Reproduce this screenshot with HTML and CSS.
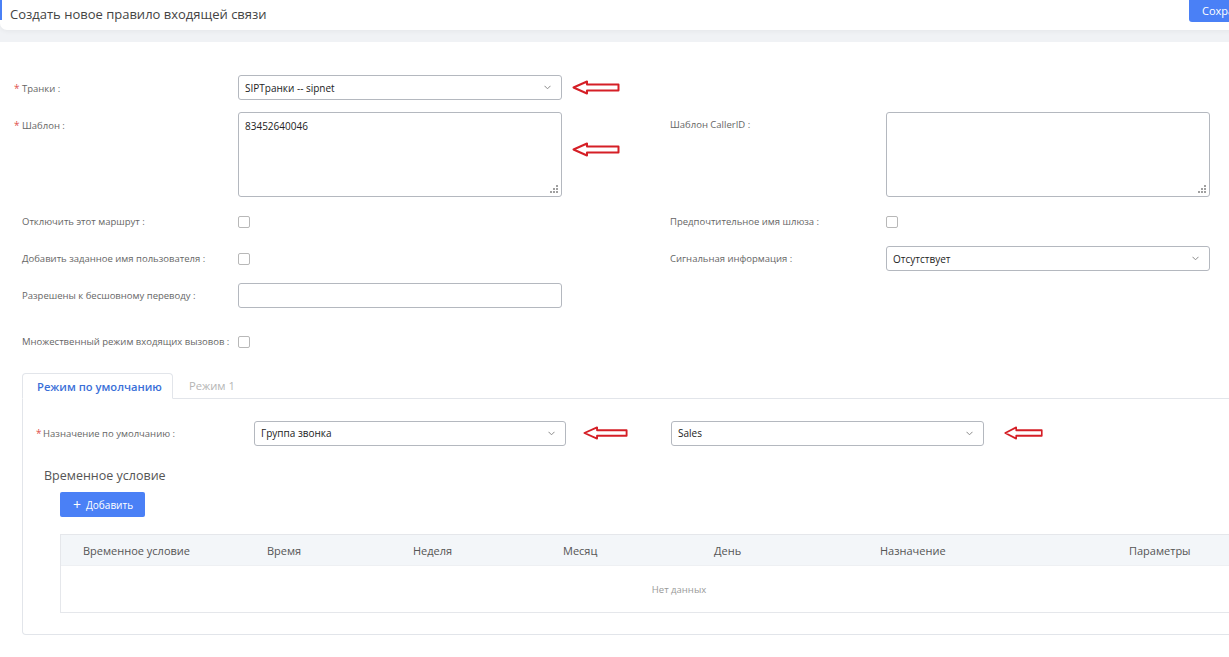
FILE: index.html
```html
<!DOCTYPE html>
<html lang="ru">
<head>
<meta charset="utf-8">
<title>Создать новое правило входящей связи</title>
<link rel="stylesheet" href="styles.css">
</head>
<body>
<div class="page">
  <div class="top-wrap">
    <header class="topbar">
      <span class="edge"></span>
      <h1 class="title">Создать новое правило входящей связи</h1>
      <button class="save" type="button">Сохранить</button>
    </header>
  </div>

  <main class="content">
    <div class="form">
      <!-- row 1 -->
      <div class="label req">Транки :</div>
      <div class="select"><span>SIPТранки -- sipnet</span><svg class="chev" width="7" height="5" viewBox="0 0 7 5"><path d="M0.5 0.8 L3.5 3.8 L6.5 0.8" fill="none" stroke="#8a8a8a" stroke-width="1"/></svg></div>
      <div class="arrow-cell"><svg class="arrow" width="48" height="15" viewBox="0 0 48 15"><path d="M1.5 7.5 L15 1.5 L15 4.5 L46.5 4.5 L46.5 10.5 L15 10.5 L15 13.5 Z" fill="#fff" stroke="#d51f26" stroke-width="2" stroke-linejoin="round"/></svg></div>
      <div></div>
      <div></div>

      <!-- row 2 -->
      <div class="label req top">Шаблон :</div>
      <div class="textarea"><span>83452640046</span><svg class="grip" width="8" height="8" viewBox="0 0 8 8"><rect x="6" y="0" width="2" height="2" fill="#a0a0a0"/><rect x="3" y="3" width="2" height="2" fill="#a0a0a0"/><rect x="6" y="3" width="2" height="2" fill="#a0a0a0"/><rect x="0" y="6" width="2" height="2" fill="#a0a0a0"/><rect x="3" y="6" width="2" height="2" fill="#a0a0a0"/><rect x="6" y="6" width="2" height="2" fill="#a0a0a0"/></svg></div>
      <div class="arrow-cell lower"><svg class="arrow" width="48" height="15" viewBox="0 0 48 15"><path d="M1.5 7.5 L15 1.5 L15 4.5 L46.5 4.5 L46.5 10.5 L15 10.5 L15 13.5 Z" fill="#fff" stroke="#d51f26" stroke-width="2" stroke-linejoin="round"/></svg></div>
      <div class="label right top">Шаблон CallerID :</div>
      <div class="textarea"><svg class="grip" width="8" height="8" viewBox="0 0 8 8"><rect x="6" y="0" width="2" height="2" fill="#a0a0a0"/><rect x="3" y="3" width="2" height="2" fill="#a0a0a0"/><rect x="6" y="3" width="2" height="2" fill="#a0a0a0"/><rect x="0" y="6" width="2" height="2" fill="#a0a0a0"/><rect x="3" y="6" width="2" height="2" fill="#a0a0a0"/><rect x="6" y="6" width="2" height="2" fill="#a0a0a0"/></svg></div>

      <!-- row 3 -->
      <div class="label">Отключить этот маршрут :</div>
      <div class="check-cell"><span class="checkbox"></span></div>
      <div></div>
      <div class="label right">Предпочтительное имя шлюза :</div>
      <div class="check-cell"><span class="checkbox"></span></div>

      <!-- row 4 -->
      <div class="label">Добавить заданное имя пользователя :</div>
      <div class="check-cell"><span class="checkbox"></span></div>
      <div></div>
      <div class="label right">Сигнальная информация :</div>
      <div class="select"><span>Отсутствует</span><svg class="chev" width="7" height="5" viewBox="0 0 7 5"><path d="M0.5 0.8 L3.5 3.8 L6.5 0.8" fill="none" stroke="#8a8a8a" stroke-width="1"/></svg></div>

      <!-- row 5 -->
      <div class="label">Разрешены к бесшовному переводу :</div>
      <div class="input"></div>
      <div></div>
      <div></div>
      <div></div>

      <!-- row 6 -->
      <div class="label bottom">Множественный режим входящих вызовов :</div>
      <div class="check-cell bottom"><span class="checkbox"></span></div>
      <div></div>
      <div></div>
      <div></div>
    </div>

    <section class="tabs">
      <nav class="tab-nav">
        <div class="tab active">Режим по умолчанию</div>
        <div class="tab">Режим 1</div>
      </nav>
      <div class="pane">
        <div class="dest-row">
          <div class="label req dest-label">Назначение по умолчанию :</div>
          <div class="select dest-select"><span>Группа звонка</span><svg class="chev" width="7" height="5" viewBox="0 0 7 5"><path d="M0.5 0.8 L3.5 3.8 L6.5 0.8" fill="none" stroke="#8a8a8a" stroke-width="1"/></svg></div>
          <svg class="arrow arrow-a" width="45" height="14" viewBox="0 0 48 15" preserveAspectRatio="none"><path d="M1.5 7.5 L15 1.5 L15 4.5 L46.5 4.5 L46.5 10.5 L15 10.5 L15 13.5 Z" fill="#fff" stroke="#d51f26" stroke-width="2" stroke-linejoin="round"/></svg>
          <div class="select dest-select2"><span>Sales</span><svg class="chev" width="7" height="5" viewBox="0 0 7 5"><path d="M0.5 0.8 L3.5 3.8 L6.5 0.8" fill="none" stroke="#8a8a8a" stroke-width="1"/></svg></div>
          <svg class="arrow arrow-b" width="39" height="14" viewBox="0 0 48 15" preserveAspectRatio="none"><path d="M1.5 7.5 L15 1.5 L15 4.5 L46.5 4.5 L46.5 10.5 L15 10.5 L15 13.5 Z" fill="#fff" stroke="#d51f26" stroke-width="2" stroke-linejoin="round"/></svg>
        </div>

        <div class="time-block">
          <h2 class="time-title">Временное условие</h2>
          <div class="time-inner">
            <button class="add" type="button"><span class="plus">+</span>Добавить</button>
            <div class="table">
              <div class="thead">
                <div class="th">Временное условие</div>
                <div class="th">Время</div>
                <div class="th">Неделя</div>
                <div class="th">Месяц</div>
                <div class="th">День</div>
                <div class="th">Назначение</div>
                <div class="th">Параметры</div>
              </div>
              <div class="tbody">Нет данных</div>
            </div>
          </div>
        </div>
      </div>
    </section>
  </main>
</div>
</body>
</html>
```

FILE: styles.css
```css
html, body {
  margin: 0;
  padding: 0;
  background: #ffffff;
  overflow: hidden;
}

.page {
  width: 1360px;
  font-family: "Open Sans", "Noto Sans", "Liberation Sans", sans-serif;
  color: #333;
}

/* ---------- header ---------- */
.top-wrap {
  background: #f0f2f5;
  padding-bottom: 12px;
}

.topbar {
  display: grid;
  grid-template-columns: 2px 1187px max-content;
  align-items: start;
  height: 30px;
  background: #fff;
  border-radius: 0 0 0 7px;
  box-shadow: 0 2px 4px rgba(0, 0, 0, 0.04);
}

.edge {
  display: block;
  width: 2px;
  height: 20px;
  background: #4a80f6;
}

.title {
  margin: 0;
  padding-left: 8px;
  font-size: 13px;
  font-weight: 400;
  line-height: 28px;
  color: #444;
}

.save {
  height: 22px;
  padding: 0 13px;
  border: none;
  border-radius: 0 0 3px 3px;
  background: #4a80f6;
  color: #fff;
  font-family: inherit;
  font-size: 11px;
  line-height: 22px;
}

/* ---------- form ---------- */
.content {
  padding: 33px 0 0 14px;
}

.form {
  display: grid;
  grid-template-columns: 224px 324px 108px 216px 324px;
  grid-template-rows: 25px 85px 25px 25px 25px 34px;
  row-gap: 12px;
}

.label {
  font-size: 9.5px;
  color: #666;
  line-height: 26px;
  height: 25px;
  padding-left: 8px;
  white-space: nowrap;
}

.label.req {
  padding-left: 0;
}

.label.req::before {
  content: "*";
  display: inline-block;
  width: 8px;
  color: #e0534f;
  font-size: 10px;
}

.label.right {
  padding-left: 0;
}

.label.top {
  align-self: start;
}

.label.bottom,
.check-cell.bottom {
  align-self: end;
}

.select,
.input,
.textarea {
  box-sizing: border-box;
  border: 1px solid #b4b8bf;
  border-radius: 3px;
  background: #fff;
  font-size: 10px;
  color: #222;
}

.select {
  display: flex;
  align-items: center;
  justify-content: space-between;
  height: 25px;
  padding: 0 10px 0 6px;
}

.input {
  height: 25px;
}

.textarea {
  position: relative;
  height: 85px;
  padding: 6px 6px;
  line-height: 14px;
}

.grip {
  position: absolute;
  right: 3px;
  bottom: 3px;
}

.chev {
  display: block;
}

.check-cell {
  display: flex;
  align-items: center;
  height: 25px;
}

.checkbox {
  display: block;
  box-sizing: border-box;
  width: 12px;
  height: 12px;
  border: 1px solid #b8b8b8;
  border-radius: 2px;
  background: #fff;
}

.arrow-cell {
  padding-left: 10px;
  display: flex;
  align-items: center;
}

.arrow-cell.lower {
  align-items: flex-start;
  padding-top: 30px;
}

.arrow {
  display: block;
}

/* ---------- tabs ---------- */
.tabs {
  margin: 19px 0 0 8px;
}

.tab-nav {
  display: flex;
  border-bottom: 1px solid #e2e5ea;
}

.tab {
  box-sizing: border-box;
  height: 25px;
  padding: 0 16px;
  font-size: 11.2px;
  line-height: 25px;
  color: #b5b5b5;
}

.tab.active {
  width: 151px;
  padding: 0 0 0 14px;
  margin-bottom: -1px;
  height: 26px;
  border: 1px solid #e2e5ea;
  border-bottom-color: #fff;
  border-radius: 4px 4px 0 0;
  background: #fff;
  color: #3a6fd8;
  font-weight: 600;
}

.pane {
  border: 1px solid #e2e5ea;
  border-top: none;
  border-radius: 0 0 4px 4px;
  padding: 22px 0 21px 13px;
}

.dest-row {
  display: flex;
  align-items: center;
  height: 24px;
}

.dest-row .label.req::before {
  width: 7px;
}

.dest-label {
  width: 218px;
  height: 24px;
  line-height: 25px;
}

.dest-select {
  width: 312px;
  height: 25px;
}

.arrow-a {
  margin-left: 17px;
}

.dest-select2 {
  width: 313px;
  height: 25px;
  margin-left: 43px;
}

.arrow-b {
  margin-left: 20px;
}

.time-block {
  padding-left: 8px;
}

.time-title {
  margin: 21px 0 6px;
  font-size: 12.5px;
  font-weight: 400;
  line-height: 20px;
  color: #555;
}

.time-inner {
  padding-left: 16px;
}

.add {
  display: flex;
  align-items: center;
  height: 25px;
  width: 85px;
  padding: 0 0 0 13px;
  border: none;
  border-radius: 2px;
  background: #4a80f6;
  color: #fff;
  font-family: inherit;
  font-size: 10px;
}

.plus {
  font-size: 14px;
  line-height: 1;
  margin-right: 5px;
}

.table {
  width: 1236px;
  margin-top: 17px;
  border: 1px solid #e5e7eb;
}

.thead {
  display: grid;
  grid-template-columns: 184px 146px 150px 151px 166px 249px 1fr;
  height: 30px;
  background: #f3f6f9;
  align-items: center;
}

.th {
  padding-left: 22px;
  font-size: 11px;
  color: #555;
}

.tbody {
  height: 46px;
  line-height: 48px;
  text-align: center;
  font-size: 9.5px;
  color: #999;
  border-top: 1px solid #eef0f3;
}
```
